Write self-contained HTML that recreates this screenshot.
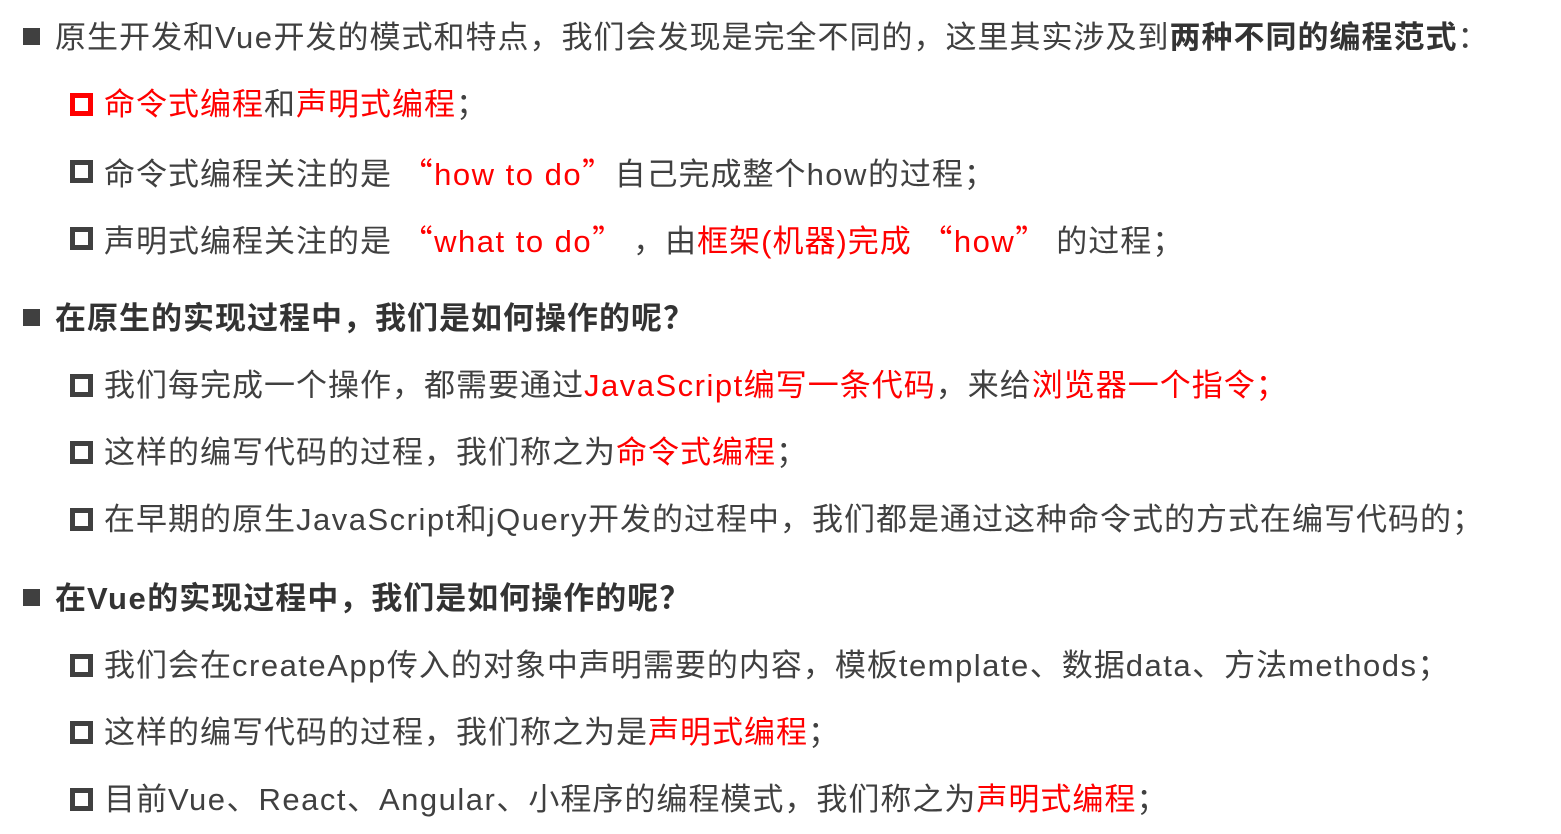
<!DOCTYPE html>
<html><head><meta charset="utf-8"><style>
body{margin:0;width:1561px;height:834px;background:#fff;position:relative;overflow:hidden;font-family:"Liberation Sans","Noto Sans CJK SC",sans-serif;color:#404040;font-size:31px;letter-spacing:1px;}
.l{position:absolute;white-space:nowrap;line-height:40px;}
.t{left:55px}
.s{left:104px}
.r{color:#f00}
.e{letter-spacing:1.5px}
.q{font-family:"Noto Sans CJK SC",sans-serif;}
b{font-weight:bold;color:#333}
.fb{position:absolute;left:23px;width:17px;height:17px;background:#404040}
.hb{position:absolute;left:70px;width:13px;height:13px;border:5px solid #404040}
.hb.red{border-color:#f00}
</style></head><body>
<div class="fb" style="top:28px"></div>
<div class="l t" style="top:18px">原生开发和<span class="e">Vue</span>开发的模式和特点，我们会发现是完全不同的，这里其实涉及到<b>两种不同的编程范式</b>：</div>
<div class="hb red" style="top:93px"></div>
<div class="l s" style="top:85px"><span class="r">命令式编程</span>和<span class="r">声明式编程</span>；</div>
<div class="hb" style="top:160px"></div>
<div class="l s" style="top:152px">命令式编程关注的是 <span class="r e"><span class="q"> “</span>how to do<span class="q">”</span></span>自己完成整个<span class="e">how</span>的过程；</div>
<div class="hb" style="top:227px"></div>
<div class="l s" style="top:219px">声明式编程关注的是 <span class="r e"><span class="q"> “</span>what to do<span class="q">” </span></span>，由<span class="r">框架(机器)完成</span> <span class="r e"><span class="q"> “</span>how<span class="q">” </span></span>的过程；</div>
<div class="fb" style="top:309px"></div>
<div class="l t" style="top:299px"><b>在原生的实现过程中，我们是如何操作的呢？</b></div>
<div class="hb" style="top:374px"></div>
<div class="l s" style="top:366px">我们每完成一个操作，都需要通过<span class="r"><span class="e">JavaScript</span>编写一条代码</span>，来给<span class="r">浏览器一个指令；</span></div>
<div class="hb" style="top:441px"></div>
<div class="l s" style="top:433px">这样的编写代码的过程，我们称之为<span class="r">命令式编程</span>；</div>
<div class="hb" style="top:508px"></div>
<div class="l s" style="top:500px">在早期的原生<span class="e">JavaScript</span>和<span class="e">jQuery</span>开发的过程中，我们都是通过这种命令式的方式在编写代码的；</div>
<div class="fb" style="top:589px"></div>
<div class="l t" style="top:579px"><b>在<span class="e">Vue</span>的实现过程中，我们是如何操作的呢？</b></div>
<div class="hb" style="top:654px"></div>
<div class="l s" style="top:646px">我们会在<span class="e">createApp</span>传入的对象中声明需要的内容，模板<span class="e">template</span>、数据<span class="e">data</span>、方法<span class="e">methods</span>；</div>
<div class="hb" style="top:721px"></div>
<div class="l s" style="top:713px">这样的编写代码的过程，我们称之为是<span class="r">声明式编程</span>；</div>
<div class="hb" style="top:788px"></div>
<div class="l s" style="top:780px">目前<span class="e">Vue</span>、<span class="e">React</span>、<span class="e">Angular</span>、小程序的编程模式，我们称之为<span class="r">声明式编程</span>；</div>
</body></html>
